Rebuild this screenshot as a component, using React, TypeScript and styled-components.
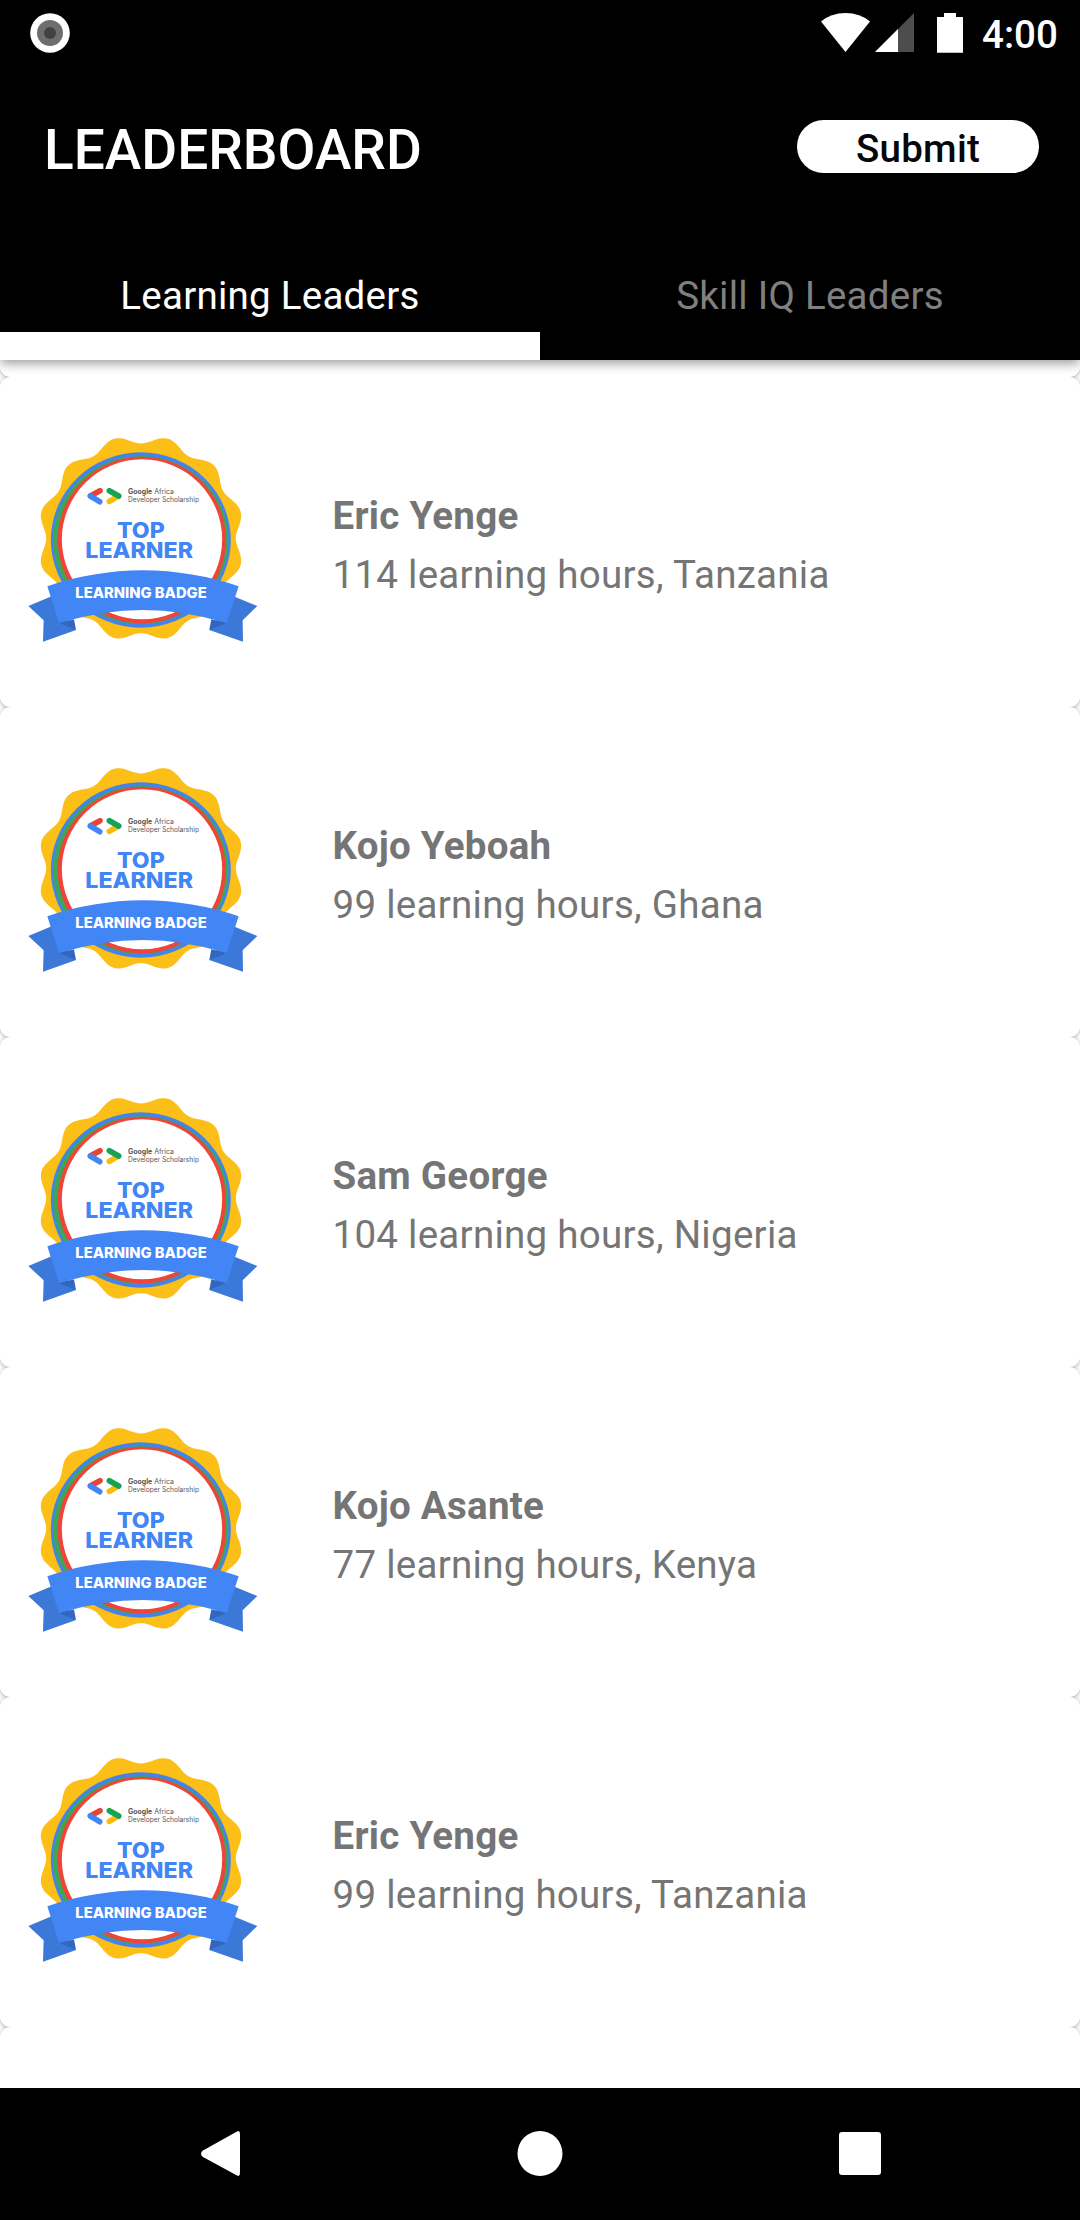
import React from "react";
import styled, { createGlobalStyle } from "styled-components";

const Global = createGlobalStyle`
  * { box-sizing: border-box; }
  body { margin: 0; background: #000; font-family: Roboto, "Noto Sans", sans-serif; }
`;

const Screen = styled.div`
  width: 1080px;
  height: 2220px;
  display: flex;
  flex-direction: column;
  overflow: hidden;
  background: #fff;
`;

const StatusBar = styled.div`
  height: 66px;
  display: flex;
  justify-content: space-between;
  align-items: center;
  padding: 0 23px 0 30px;
  color: #fff;
`;

const StatusIcons = styled.div`
  display: flex;
  align-items: center;
`;

const Clock = styled.span`
  font-size: 38.5px;
  font-weight: 500;
  line-height: 46px;
  width: 75px;
  margin-left: 19px;
  padding-top: 3px;
  white-space: nowrap;
`;

const Header = styled.header`
  position: relative;
  z-index: 1;
  flex: none;
  height: 360px;
  background: #000;
  color: #fff;
  box-shadow: 0 3px 11px rgba(0, 0, 0, 0.42);
`;

const Toolbar = styled.div`
  height: 165px;
  display: flex;
  justify-content: space-between;
  align-items: flex-start;
  padding: 51px 41px 0 44px;
`;

const Title = styled.h1`
  margin: 0;
  font-size: 55px;
  font-weight: 500;
  line-height: 66px;
`;

const SubmitButton = styled.button`
  width: 242px;
  height: 53px;
  margin-top: 3px;
  padding: 5px 0 0;
  border: 0;
  border-radius: 27px;
  background: #fff;
  color: #060708;
  font: 500 38.5px/48px Roboto, sans-serif;
  letter-spacing: 0.25px;
`;

const Tabs = styled.nav`
  display: grid;
  grid-template-columns: 1fr 1fr;
  height: 129px;
`;

const Tab = styled.a<{ $active?: boolean }>`
  display: flex;
  justify-content: center;
  align-items: flex-start;
  padding-top: 42px;
  border-bottom: 28px solid ${(p) => (p.$active ? "#fff" : "transparent")};
  color: ${(p) => (p.$active ? "#fff" : "#808080")};
  font-size: 38.5px;
  line-height: 46px;
  letter-spacing: 0.25px;
`;

const List = styled.main`
  isolation: isolate;
  flex: 1;
  min-height: 0;
  overflow: hidden;
  background: #fff;
`;

const Card = styled.article<{ $tail?: boolean }>`
  position: relative;
  height: ${(p) => (p.$tail ? 17 : 330)}px;
  display: flex;
  align-items: flex-start;
  padding: ${(p) => (p.$tail ? "0" : "48px 0 0 20px")};
  background: #fff;
  border-radius: ${(p) => (p.$tail ? "0 0 11px 11px" : "11px")};

  /* The elevation shadow sits beneath every neighbouring card. */
  &::before {
    content: "";
    position: absolute;
    inset: 0;
    z-index: -1;
    border-radius: inherit;
    box-shadow: 0 1px 5px rgba(0, 0, 0, 0.34);
  }
`;

const Info = styled.div`
  margin: 68px 0 0 62.5px;
  color: #757575;
  font-size: 38.5px;
  letter-spacing: 0.27px;
`;

const Name = styled.div`
  font-weight: 700;
  line-height: 45px;
  margin-bottom: 14px;
`;

const Detail = styled.div`
  line-height: 45px;
`;

const NavBar = styled.footer`
  flex: none;
  height: 132px;
  display: grid;
  grid-template-columns: 441px 198px 441px;
  align-items: center;
  justify-items: center;
  background: #000;
`;

const BadgeSvg = styled.svg`
  display: block;
  flex: none;
  font-family: Inter, sans-serif;
`;

const scallop = Array.from({ length: 240 }, (_, i) => {
  const a = (i / 240) * Math.PI * 2;
  const r = 297 - 12.5 * Math.cos(12 * a);
  return `${(363 + r * Math.sin(a)).toFixed(1)},${(340 - r * Math.cos(a)).toFixed(1)}`;
}).join(" ");

function Badge() {
  return (
    <BadgeSvg width="250" height="230" viewBox="0 0 750 690">
      <polygon points={scallop} fill="#fcbf17" />
      <ellipse cx="362.500" cy="345" rx="270" ry="263" fill="#4583ec" />
      <ellipse cx="362.500" cy="345" rx="262.500" ry="252" fill="#3da657" />
      <ellipse cx="365.500" cy="345" rx="252.500" ry="250" fill="#ef4437" />
      <ellipse cx="366" cy="343" rx="240.500" ry="240" fill="#fff" />
      <g strokeWidth="17" strokeLinecap="round" fill="none">
        <path d="M212 212L240 197" stroke="#ea4335" />
        <path d="M295 213L268 229" stroke="#fbbc05" />
        <path d="M268 197L296 213" stroke="#17a354" />
        <path d="M211 213L239 230" stroke="#4285f4" />
      </g>
      <g fill="#55575a" fontSize="21">
        <text x="324" y="206" textLength="138" lengthAdjust="spacingAndGlyphs">
          <tspan fontWeight="700">Google</tspan> Africa
        </text>
        <text x="324" y="232" textLength="213" lengthAdjust="spacingAndGlyphs">Developer Scholarship</text>
      </g>
      <g fill="#4285f4" fontWeight="800" fontSize="65">
        <text x="291" y="340" textLength="143" lengthAdjust="spacingAndGlyphs">TOP</text>
        <text x="196" y="399" textLength="323" lengthAdjust="spacingAndGlyphs">LEARNER</text>
      </g>
      <path d="M25 543L95 514L168 615L69 650L71 586Z" fill="#3c78d8" />
      <path d="M712 543L640 514L568 615L669 650L668 586Z" fill="#3c78d8" />
      <path d="M117 594L162 583L168 615Z" fill="#3367bd" />
      <path d="M620 594L574 583L568 615Z" fill="#3367bd" />
      <path d="M82 484Q220 437 369 436Q518 437 656 484L620 594Q490 555 369 555Q248 555 117 594Z" fill="#4285f4" />
      <text x="166" y="518" textLength="394" lengthAdjust="spacingAndGlyphs" fill="#fff" fontWeight="800" fontSize="43">
        LEARNING BADGE
      </text>
    </BadgeSvg>
  );
}

const leaders = [
  { name: "Eric Yenge", hours: 114, country: "Tanzania" },
  { name: "Kojo Yeboah", hours: 99, country: "Ghana" },
  { name: "Sam George", hours: 104, country: "Nigeria" },
  { name: "Kojo Asante", hours: 77, country: "Kenya" },
  { name: "Eric Yenge", hours: 99, country: "Tanzania" },
];

export default function App() {
  return (
    <Screen>
      <Global />
      <Header>
        <StatusBar>
          <svg width="40" height="66" viewBox="0 0 40 66">
            <circle cx="20" cy="33" r="19.800" fill="#fff" />
            <circle cx="20" cy="33" r="13" fill="#6e6e6e" />
            <circle cx="20" cy="33" r="6" fill="#424242" />
          </svg>
          <StatusIcons>
            <svg width="143" height="66" viewBox="820 0 143 66" fill="#fff">
              <path d="M821 21.500Q831 13 845.500 13Q860 13 870 21.500L845.500 52Z" />
              <path d="M914 13V52H875Z" fill="#4d4d4d" />
              <path d="M898 29V52H875Z" />
              <path d="M944 13H956V17H963V52.700H937V17H944Z" />
            </svg>
            <Clock>4:00</Clock>
          </StatusIcons>
        </StatusBar>
        <Toolbar>
          <Title>LEADERBOARD</Title>
          <SubmitButton>Submit</SubmitButton>
        </Toolbar>
        <Tabs>
          <Tab $active>Learning Leaders</Tab>
          <Tab>Skill IQ Leaders</Tab>
        </Tabs>
      </Header>
      <List>
        <Card $tail />
        {leaders.map((l, i) => (
          <Card key={i}>
            <Badge />
            <Info>
              <Name>{l.name}</Name>
              <Detail>
                {l.hours} learning hours, {l.country}
              </Detail>
            </Info>
          </Card>
        ))}
        <Card />
      </List>
      <NavBar>
        <svg width="40" height="46" viewBox="201 2132 40 46">
          <path d="M237 2132.500Q240 2131 240 2135V2174Q240 2178 237 2176.500L203 2158Q199 2154.500 203 2151.500Z" fill="#fff" />
        </svg>
        <svg width="46" height="46" viewBox="0 0 46 46">
          <circle cx="23" cy="22.500" r="22.500" fill="#fff" />
        </svg>
        <svg width="42" height="44" viewBox="0 0 42 44">
          <rect y="0" width="42" height="43" rx="3" fill="#fff" />
        </svg>
      </NavBar>
    </Screen>
  );
}
